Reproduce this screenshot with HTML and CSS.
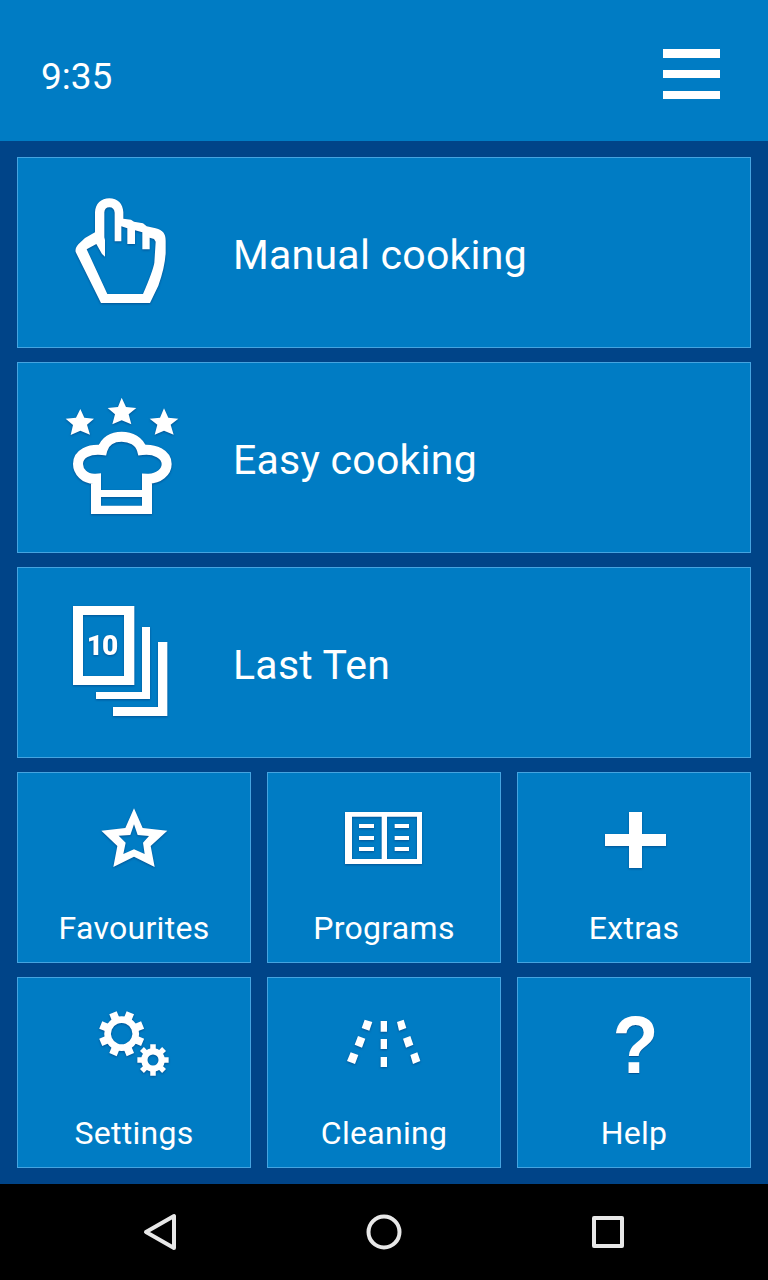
FILE: index.html
```html
<!DOCTYPE html>
<html lang="en">
<head>
<meta charset="utf-8">
<title>Cooking</title>
<link rel="stylesheet" href="styles.css">
</head>
<body>
<div class="screen">
  <header class="topbar">
    <time class="clock">9:35</time>
    <div class="menu" role="button" aria-label="Menu"><span></span><span></span><span></span></div>
  </header>
  <main class="tiles">
    <section class="tile wide">
      <svg class="icon-large" viewBox="0 0 420 420">
        <path class="solid" fill-rule="evenodd" d="M135 157V97C136 71 153 55 178 55C203 55 219 71 220 97V116L243 119L252 125L279 130L290 139L317 145C339 151 347 161 347 182V220Q344 265 325 317L300 369H153L77 216C75 207 79 200 85 193L105 174ZM163 172V97C164 87 169 82 178 82C188 82 193 88 194 98V184H214V139L232 145V192H255V151L277 157V208H299V173L312 177L317 185L313 248Q309 272 279 342H172L110 208L139 192L156 222L165 230V180Z"/>
      </svg>
      <span class="title">Manual cooking</span>
    </section>
    <section class="tile wide">
      <svg class="icon-large" viewBox="0 0 420 420">
        <path class="line" stroke-width="30" d="M138 373V281C103 284 84 258 84 237C84 206 117 191 157 195C164 168 188 155 215 155C242 155 269 169 276 195C314 190 350 208 350 237C350 260 327 283 291 281V373"/>
        <path class="solid" d="M123 362H306V387H123ZM123 315H306V336H123ZM91 72L103 98L132 101L111 119L120 149L91 137L62 150L69 120L47 101L78 98ZM215 38L228 66L259 69L236 88L244 118L215 106L187 118L195 88L173 69L204 66ZM342 70L355 98L385 101L362 119L371 149L342 137L314 149L322 119L299 101L330 98Z"/>
      </svg>
      <span class="title">Easy cooking</span>
    </section>
    <section class="tile wide">
      <svg class="icon-large" viewBox="0 0 420 420">
        <path class="solid" fill-rule="evenodd" d="M69 48H253V285H69ZM99 75H222V258H99ZM276 111H300V327H138V306H276ZM324 156H352V378H189V351H324Z"/>
        <text class="ten" x="156" y="196">10</text>
      </svg>
      <span class="title">Last Ten</span>
    </section>
    <section class="tile">
      <svg class="icon-small" viewBox="0 0 330 270">
        <path class="solid" fill-rule="evenodd" d="M162 55L188 114L262 122L212 168L224 231L162 200L100 231L112 168L64 122L136 114ZM162 103L151 135L116 137L137 158L130 192L162 178L194 192L189 158L207 138L173 135Z"/>
      </svg>
      <span class="label">Favourites</span>
    </section>
    <section class="tile">
      <svg class="icon-small" viewBox="0 0 330 270">
        <path class="solid" fill-rule="evenodd" d="M45 66H276V222H45ZM66 80V207H155V80ZM171 80V207H261V80Z"/>
        <path class="solid" d="M87 102H132V114H87ZM87 138H132V150H87ZM87 171H132V183H87ZM194 102H237V114H194ZM194 138H237V150H194ZM194 171H237V183H194Z"/>
      </svg>
      <span class="label">Programs</span>
    </section>
    <section class="tile">
      <svg class="icon-small" viewBox="0 0 330 270">
        <path class="solid" d="M147 66H186V132H258V168H186V234H147V168H75V132H147Z"/>
      </svg>
      <span class="label">Extras</span>
    </section>
    <section class="tile lower">
      <svg class="icon-small" viewBox="0 0 330 270">
        <g transform="translate(125 101) rotate(22.5)">
          <circle class="line" r="42" stroke-width="20"/>
          <g id="big-teeth">
            <path id="pair" class="solid" d="M-12 -68H12L12 -47H-12ZM-12 68H12L12 47H-12Z"/>
            <use href="#pair" transform="rotate(45)"/>
            <use href="#pair" transform="rotate(90)"/>
            <use href="#pair" transform="rotate(135)"/>
          </g>
        </g>
        <g transform="translate(219 180)">
          <circle class="line" r="26" stroke-width="19"/>
          <use href="#big-teeth" transform="scale(.69)"/>
        </g>
      </svg>
      <span class="label">Settings</span>
    </section>
    <section class="tile lower">
      <svg class="icon-small" viewBox="0 0 330 270">
        <path class="solid" d="M152 63H171V95H152ZM152 117H171V147H152ZM152 171H171V201H152ZM104 59L127 66L118 92L95 84ZM84 108L106 116L96 143L74 134ZM62 157L85 165L75 192L51 183ZM201 66L221 59L229 84L207 92ZM219 116L241 108L250 134L228 143ZM241 165L262 157L271 183L249 192Z"/>
      </svg>
      <span class="label">Cleaning</span>
    </section>
    <section class="tile lower">
      <span class="question">?</span>
      <span class="label">Help</span>
    </section>
  </main>
  <nav class="navbar">
    <svg viewBox="0 0 48 48"><path d="M38 8V40L10 24Z"/></svg>
    <svg viewBox="0 0 48 48"><circle cx="24" cy="24" r="15.5"/></svg>
    <svg viewBox="0 0 48 48"><rect x="10" y="10" width="28" height="28"/></svg>
  </nav>
</div>
</body>
</html>
```

FILE: styles.css
```css
* { box-sizing: border-box; }
body { margin: 0; background: #004488; font-family: Roboto, sans-serif; color: #fff; }
.screen { width: 768px; height: 1280px; display: flex; flex-direction: column; }
.topbar {
  height: 141px; padding: 11px 48px 0 41px; background: #007cc4;
  display: flex; align-items: center; justify-content: space-between;
}
.clock { font-size: 37px; line-height: 44px; padding-top: 1px; }
.menu { width: 57px; height: 50px; margin-bottom: 4px; display: flex; flex-direction: column; justify-content: space-between; }
.menu span { height: 8.5px; background: #fff; }
.tiles {
  flex: 1; padding: 16px 17px; display: grid;
  grid-template-columns: repeat(3, 234px); grid-auto-rows: 191px; gap: 14px 16px;
}
.tile {
  background: #007cc4; border: 1px solid #45a4e0; padding-top: 17px;
  display: flex; flex-direction: column; align-items: center;
}
.wide { grid-column: 1 / -1; flex-direction: row; align-items: flex-start; padding: 22px 0 0 32px; }
.lower { padding-top: 22px; }
.icon-large { width: 140px; height: 140px; flex: none; }
.icon-small { width: 110px; height: 90px; flex: none; margin-left: 2px; }
.icon-large, .icon-small { filter: drop-shadow(0 1.5px 1px rgba(0, 50, 110, .55)); }
.solid { fill: #fff; }
.line { fill: none; stroke: #fff; }
.title { margin: 50px 0 0 43px; font-size: 41px; line-height: 50px; letter-spacing: .25px; }
.label { margin-top: 29px; font-size: 32px; line-height: 38px; letter-spacing: .3px; }
.lower .label { margin-top: 24px; }
.ten { font: 900 84px Roboto, sans-serif; letter-spacing: -3px; fill: #fff; text-anchor: middle; }
.question {
  height: 90px; margin-left: 2px; font: bold 80px/90px "Liberation Sans", sans-serif;
  transform: scale(.94, 1.03); text-shadow: 0 1.5px 1px rgba(0, 50, 110, .55);
}
.navbar { height: 96px; background: #000; display: flex; align-items: center; justify-content: center; gap: 176px; }
.navbar svg { width: 48px; height: 48px; fill: none; stroke: #e8e8e8; stroke-width: 4; stroke-linejoin: round; }
```
